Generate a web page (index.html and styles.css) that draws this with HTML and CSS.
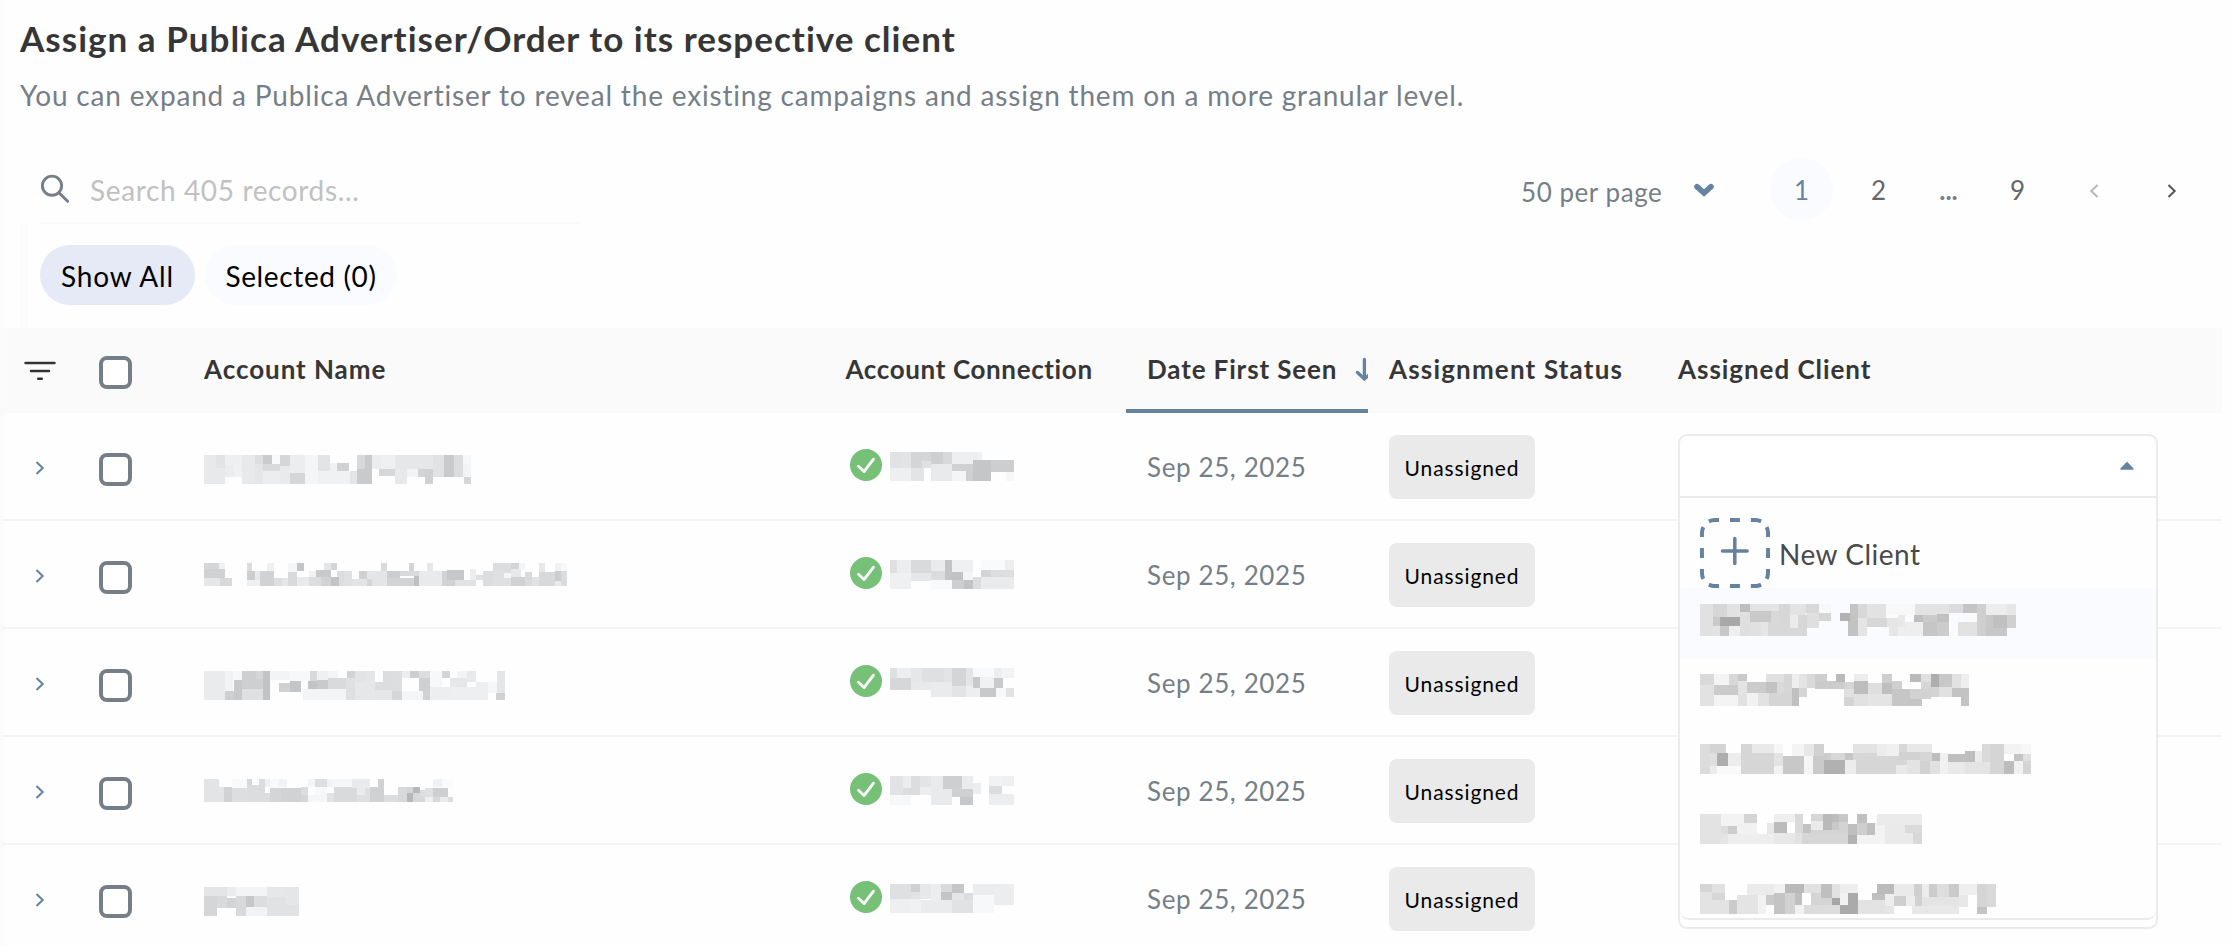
FILE: index.html
```html
<!DOCTYPE html>
<html lang="en">
<head>
<meta charset="utf-8">
<title>Assign clients</title>
<link rel="stylesheet" href="styles.css">
</head>
<body>
<svg class="defs" width="0" height="0">
  <symbol id="chev" viewBox="0 0 10 16"><path d="M1.5 2 L7.7 8 L1.5 14" fill="none" stroke="currentColor" stroke-width="2"/></symbol>
  <symbol id="ok" viewBox="0 0 32 32"><circle cx="16" cy="16" r="16" fill="#76c078"/><path d="M8.5 17.2 L14 22.6 L23.5 10.2" fill="none" stroke="#fff" stroke-width="2.8" stroke-linecap="round" stroke-linejoin="round"/></symbol>
</svg>
<main class="page">
  <h1 class="title">Assign a Publica Advertiser/Order to its respective client</h1>
  <p class="subtitle">You can expand a Publica Advertiser to reveal the existing campaigns and assign them on a more granular level.</p>

  <div class="toolbar">
    <div class="search">
      <svg class="search-icon" width="30" height="30" viewBox="0 0 30 30"><circle cx="12" cy="11.700" r="9.600" fill="none" stroke="#767e87" stroke-width="2.900"/><path d="M19 18.800 L27.600 27.300" stroke="#767e87" stroke-width="3" stroke-linecap="round"/></svg>
      <span class="search-text">Search 405 records...</span>
    </div>
    <div class="pager">
      <span class="per-page">50 per page</span>
      <svg class="per-chev" width="22" height="16" viewBox="0 0 22 16"><path d="M4 4.6 L11 11 L18 4.6" fill="none" stroke="#65839e" stroke-width="5.6" stroke-linecap="round"/></svg>
      <span class="pg pg-on">1</span>
      <span class="pg pg-two">2</span>
      <span class="pg pg-dots">...</span>
      <span class="pg pg-nine">9</span>
      <svg class="prev" width="10" height="16"><use href="#chev"/></svg>
      <svg class="next" width="10" height="16"><use href="#chev"/></svg>
    </div>
  </div>

  <div class="chips">
    <span class="chip chip-on">Show All</span>
    <span class="chip chip-sel">Selected (0)</span>
  </div>

  <section class="table">
    <div class="row head">
      <div class="c-exp"><svg class="filter" width="32" height="20" viewBox="0 0 32 20"><path d="M1.5 2 H30.5 M7 10 H25 M14.2 17.8 H17.8" stroke="#333" stroke-width="2.4" stroke-linecap="round"/></svg></div>
      <div class="c-check"><i class="box"></i></div>
      <div class="h-name">Account Name</div>
      <div class="h-conn">Account Connection</div>
      <div class="sorted"><span class="h-date">Date First Seen</span><svg class="sort" width="13" height="24" viewBox="0 0 13 24"><path d="M9.4 2.500 V21.5 M2.500 15.500 L9.4 22 L16.8 15.500" fill="none" stroke="#65839e" stroke-width="3.300" stroke-linecap="round"/></svg></div>
      <div class="h-status">Assignment Status</div>
      <div class="h-client">Assigned Client</div>
    </div>
    <div class="row">
      <div class="c-exp"><svg class="exp" width="10" height="16"><use href="#chev"/></svg></div>
      <div class="c-check"><i class="box"></i></div>
      <div><svg class="mosaic name tall" data-m="n1"></svg></div>
      <div class="c-conn"><svg width="32" height="32"><use href="#ok"/></svg><svg class="mosaic conn" data-m="c1"></svg></div>
      <div class="c-date">Sep 25, 2025</div>
      <div class="c-status"><span class="badge">Unassigned</span></div>
      <div class="c-client">
        <div class="select">
          <div class="field"><svg width="16" height="10" viewBox="0 0 16 10"><path d="M2 8 L8 1.8 L14 8 Z" fill="#65839e" stroke="#65839e" stroke-width="1.6" stroke-linejoin="round"/></svg></div>
          <div class="menu">
            <div class="new">
              <svg width="70" height="70" viewBox="0 0 71 70" preserveAspectRatio="none"><path d="M9 3.4 Q12 2 14.500 2 H19.300 M30.400 2 H40.500 M51.600 2 H56.500 Q59 2 62 3.400 M9 66.600 Q12 68 14.500 68 H19.300 M30.400 68 H40.500 M51.600 68 H56.500 Q59 68 62 66.600 M3.400 9.200 Q2 12 2 14.500 V19 M2 30 V40 M2 51 V55.500 Q2 58 3.400 60.800 M67.600 9.200 Q69 12 69 14.500 V19 M69 30 V40 M69 51 V55.500 Q69 58 67.600 60.800" fill="none" stroke="#65839e" stroke-width="4"/><path d="M22.800 33 H47.800 M35.300 20.500 V45.500" stroke="#65839e" stroke-width="3.600" stroke-linecap="round"/></svg>
              <span class="new-text">New Client</span>
            </div>
            <div class="opt opt-on"><svg class="mosaic" data-m="d1"></svg></div>
            <div class="opt"><svg class="mosaic" data-m="d2"></svg></div>
            <div class="opt"><svg class="mosaic" data-m="d3"></svg></div>
            <div class="opt"><svg class="mosaic" data-m="d4"></svg></div>
            <div class="opt"><svg class="mosaic" data-m="d5"></svg></div>
          </div>
        </div>
      </div>
    </div>
    <div class="row">
      <div class="c-exp"><svg class="exp" width="10" height="16"><use href="#chev"/></svg></div>
      <div class="c-check"><i class="box"></i></div>
      <div><svg class="mosaic name" data-m="n2"></svg></div>
      <div class="c-conn"><svg width="32" height="32"><use href="#ok"/></svg><svg class="mosaic conn" data-m="c2"></svg></div>
      <div class="c-date">Sep 25, 2025</div>
      <div class="c-status"><span class="badge">Unassigned</span></div>
    </div>
    <div class="row">
      <div class="c-exp"><svg class="exp" width="10" height="16"><use href="#chev"/></svg></div>
      <div class="c-check"><i class="box"></i></div>
      <div><svg class="mosaic name tall" data-m="n3"></svg></div>
      <div class="c-conn"><svg width="32" height="32"><use href="#ok"/></svg><svg class="mosaic conn" data-m="c3"></svg></div>
      <div class="c-date">Sep 25, 2025</div>
      <div class="c-status"><span class="badge">Unassigned</span></div>
    </div>
    <div class="row">
      <div class="c-exp"><svg class="exp" width="10" height="16"><use href="#chev"/></svg></div>
      <div class="c-check"><i class="box"></i></div>
      <div><svg class="mosaic name" data-m="n4"></svg></div>
      <div class="c-conn"><svg width="32" height="32"><use href="#ok"/></svg><svg class="mosaic conn" data-m="c4"></svg></div>
      <div class="c-date">Sep 25, 2025</div>
      <div class="c-status"><span class="badge">Unassigned</span></div>
    </div>
    <div class="row">
      <div class="c-exp"><svg class="exp" width="10" height="16"><use href="#chev"/></svg></div>
      <div class="c-check"><i class="box"></i></div>
      <div><svg class="mosaic name tall" data-m="n5"></svg></div>
      <div class="c-conn"><svg width="32" height="32"><use href="#ok"/></svg><svg class="mosaic conn" data-m="c5"></svg></div>
      <div class="c-date">Sep 25, 2025</div>
      <div class="c-status"><span class="badge">Unassigned</span></div>
    </div>
  </section>
</main>
<script src="mosaic.js"></script>
</body>
</html>
```
FILE: styles.css
```css
* { box-sizing: border-box; }
body { margin: 0; width: 2232px; height: 946px; overflow: hidden; background: #fefefe; font-family: Lato, "Open Sans", sans-serif; color: #333; }
svg { display: block; flex: none; }
.defs { position: absolute; }
.page { height: 946px; overflow: hidden; padding-top: 16px; background: linear-gradient(90deg, #fafafa 0, #fefefe 8px); }
.title { margin: 0 0 0 20px; height: 44px; line-height: 44px; font-size: 35px; font-weight: 700; letter-spacing: 1.02px; white-space: nowrap; color: #363636; }
.subtitle { margin: 15px 0 0 20px; height: 39px; line-height: 40px; font-size: 28px; letter-spacing: .82px; white-space: nowrap; color: #767e87; }

.toolbar { display: flex; justify-content: space-between; height: 110px; padding: 40px 0 0 40px; }
.search { display: flex; align-items: center; width: 540px; height: 70px; border-bottom: 2px solid #fafafa; }
.search-icon { margin: 2px 20px 0 0; }
.search-text { padding-top: 3px; line-height: 40px; font-size: 28px; letter-spacing: .63px; color: #c1c1c1; }
.pager { display: flex; align-items: center; width: 710px; height: 71px; font-size: 26px; color: #767e87; }
.per-page { width: 172px; margin-left: -1px; padding-top: 4px; letter-spacing: .55px; white-space: nowrap; }
.per-chev { margin-right: 55px; }
.pg { width: 63px; height: 63px; line-height: 65px; text-align: center; color: #666; }
.pg-on { background: #fafbfe; border-radius: 50%; color: #65839e; }
.pg-two { margin-left: 14px; }
.pg-dots { margin-left: 7px; font-weight: 700; color: #767e87; }
.pg-nine { margin-left: 6px; }
.prev { margin: 2px 0 0 40px; transform: scaleX(-1); color: #b5b9bd; }
.next { margin: 2px 0 0 68px; color: #555; }

.chips { display: flex; gap: 10px; height: 104px; margin-left: 20px; padding: 21px 0 0 12px; border-left: 8px solid #fbfbfb; }
.chip { width: 155px; height: 60px; line-height: 63px; border-radius: 30px; background: #fafbfe; font-size: 28px; letter-spacing: .9px; text-align: center; white-space: nowrap; color: #000; }
.chip-on { background: #e6eaf6; }
.chip-sel { width: 192px; letter-spacing: .65px; }

.table { width: 2220px; margin-left: 2px; }
.row { display: grid; grid-template-columns: 97px 105px 641.5px 280.5px 263px 289px 544px; align-items: center; height: 108px; border-bottom: 2px solid #f4f4f4; }
.head { height: 85px; border-bottom: 0; background: #fafafa; font-size: 26px; font-weight: 700; white-space: nowrap; color: #363636; }
.h-name, .h-conn, .h-status, .h-client { padding-bottom: 4px; }
.h-name, .h-client { letter-spacing: .95px; }
.h-conn { letter-spacing: .63px; }
.h-status { letter-spacing: 1.17px; }
.sorted { display: flex; align-items: center; align-self: stretch; width: 242px; padding-left: 21px; border-bottom: 4px solid #65839e; }
.h-date { width: 209px; letter-spacing: .87px; }
.c-exp { padding-left: 22px; }
.exp { margin: 3px 0 0 11px; color: #65839e; }
.box { display: block; width: 33px; height: 33px; margin-top: 7px; border: 4px solid #767e87; border-radius: 8px; background: #fff; }
.head .box { margin-top: 4px; }
.mosaic { shape-rendering: crispEdges; }
.name { margin-top: 1px; }
.tall { margin-top: 7px; }
.c-conn { display: flex; align-items: center; padding: 0 0 3px 4.5px; }
.conn { margin: 3px 0 0 8px; }
.c-date { padding: 2px 0 0 21px; font-size: 26px; letter-spacing: .62px; color: #767e87; }
.badge { display: block; width: 146px; height: 64px; line-height: 66px; margin-top: 1px; border-radius: 8px; background: #eaeaea; font-size: 21px; letter-spacing: .9px; text-align: center; color: #000; }

.c-client { position: relative; align-self: start; }
.select { position: absolute; z-index: 2; top: 21px; left: 0; width: 480px; height: 495px; border: 2px solid #ebebeb; border-radius: 9px; background: #fff; }
.field { display: flex; align-items: center; justify-content: flex-end; height: 60px; padding-right: 21px; }
.menu { height: 424px; border: solid #ebebeb; border-width: 2px 0; border-radius: 0 0 9px 9px; background: #fefefe; overflow: hidden; }
.new { display: flex; align-items: center; height: 90px; padding: 20px 0 0 20px; }
.new-text { margin-left: 9px; padding-top: 1px; font-size: 28px; letter-spacing: .5px; color: #4a4a4a; }
.opt { height: 70px; padding: 16px 0 0 20px; }
.opt-on { background: #fafbfe; }
```
FILE: mosaic.js
```js
// Redaction mosaics. v: x y w h; s: horizontal units per pixel; t: blue tint; c: x1 y1 x2 y2 shade
const data = {
n1: { v: [533,405,698,87], s: 2.613, t: 1, c: "533 405 588 492 e8;564 405 588 443 e2;588 405 632 435 ee;588 435 612 471 eb;612 435 632 471 f0;632 405 666 492 e8;666 405 687 432 dd;687 405 711 432 ca;711 405 732 432 f9;732 405 758 437 d5;758 405 797 459 ec;687 432 732 452 d9;666 432 687 492 e5;687 452 732 492 ec;732 437 758 492 e9;758 459 797 492 d5;797 405 831 492 f4;831 405 862 453 e3;862 429 881 453 f0;881 429 912 453 d0;831 453 915 492 f0;915 453 933 492 e4;933 405 953 447 d8;953 405 972 492 c9;933 447 972 492 c9;972 405 996 447 ec;996 405 1032 447 ef;990 447 1032 468 d6;1032 405 1132 447 e6;1032 447 1064 492 e8;1064 447 1092 471 f2;1092 447 1111 471 d3;1111 447 1132 492 d0;1132 405 1160 471 e1;1160 405 1186 471 c9;1186 405 1210 471 dc;1210 405 1231 432 f6;1210 432 1231 471 f3;1213 471 1231 492 d5" },
n2: { v: [533,729,949,69], s: 2.613, t: 1, c: "533 729 572 747 d5;533 747 588 774 d0;572 729 588 747 ef;533 774 575 798 e6;575 774 606 798 d8;645 729 659 753 dc;698 729 716 753 ef;645 753 666 780 cc;666 753 679 798 e8;679 753 716 798 d1;645 780 679 798 ef;716 774 737 798 dd;753 729 776 756 f4;776 729 794 753 c4;737 774 776 798 e5;753 756 776 798 d9;776 771 808 798 ea;808 753 826 771 f1;826 750 865 771 c8;846 729 865 750 e5;865 729 881 750 d4;808 771 838 798 dc;838 771 865 798 d1;865 771 886 798 c3;881 753 899 771 dc;886 771 920 798 dd;899 753 920 798 e0;938 753 959 777 cf;920 777 959 798 e3;959 777 972 798 d4;959 753 980 777 e6;972 771 1011 798 e3;980 753 1011 798 e4;996 729 1011 753 d9;1011 753 1045 774 cc;1011 774 1082 798 d2;1045 753 1095 768 d9;1069 729 1082 753 d2;1082 768 1095 798 bf;1095 753 1155 798 e9;1116 729 1132 753 e6;1155 753 1189 798 d1;1168 750 1214 780 c6;1189 780 1243 798 e1;1229 747 1243 780 ec;1243 765 1262 780 df;1262 753 1288 798 dc;1288 729 1335 753 dc;1288 753 1335 798 df;1316 759 1335 774 f4;1335 729 1356 747 d4;1335 747 1361 771 e7;1335 771 1374 798 d1;1356 729 1372 747 f3;1372 756 1390 798 da;1390 771 1408 798 e2;1408 729 1424 756 e7;1408 756 1450 798 d8;1450 729 1466 753 f0;1450 753 1466 783 cc;1466 729 1482 753 f7;1466 753 1482 798 db;1450 783 1466 798 e8" },
n3: { v: [531,93,786,87], s: 2.613, t: 1, c: "531 93 585 180 ea;585 93 606 153 f2;585 153 609 180 ce;606 93 630 120 f7;609 120 630 180 c8;630 93 666 147 ce;666 93 685 117 d4;666 117 685 147 ce;630 147 685 180 df;685 93 703 180 c2;703 93 755 120 f3;755 93 808 123 f7;727 129 755 156 cf;755 123 784 156 c4;808 93 826 123 d7;826 93 855 120 ef;855 93 881 114 f4;802 123 826 156 c3;826 120 855 147 c9;855 114 904 147 d9;789 147 902 180 f3;904 93 925 114 d2;902 114 925 180 df;925 93 954 126 e2;925 126 977 180 e6;954 93 977 126 e5;998 93 1022 126 dc;977 126 1022 150 dc;977 150 1022 180 e5;1022 93 1048 153 dd;1022 153 1048 180 d5;1048 93 1069 114 ec;1069 93 1092 114 cd;1092 93 1121 114 dc;1092 114 1121 153 cf;1048 153 1103 180 f4;1103 153 1121 180 d0;1121 93 1152 141 f7;1152 93 1173 114 d4;1121 141 1173 180 ed;1173 114 1218 141 e6;1192 93 1218 114 f2;1218 93 1241 126 e8;1173 141 1241 180 ee;1241 126 1273 180 ee;1273 126 1295 159 f5;1295 93 1317 159 e5;1294 159 1317 180 d0" },
n4: { v: [531,417,650,69], s: 2.613, t: 1, c: "531 417 570 486 e3;570 441 583 486 e3;583 441 604 486 d1;604 417 643 444 f8;604 444 643 486 dd;643 417 656 435 d5;643 435 674 459 dc;674 417 690 459 db;690 417 703 441 ef;643 459 703 486 dc;703 417 727 444 f8;727 417 747 441 f1;703 444 733 486 d4;733 444 784 486 d1;784 441 802 465 dc;784 465 802 486 d5;802 417 821 441 f4;821 417 852 441 dd;802 465 852 486 f5;821 441 852 465 f7;852 417 865 441 f1;852 459 870 486 e2;865 417 917 444 f5;870 441 930 486 d9;917 417 964 444 ea;930 444 951 465 eb;951 444 964 465 df;930 465 964 486 df;964 441 985 486 d0;985 417 1001 486 d0;1001 465 1037 486 dc;1037 441 1061 486 d8;1061 441 1077 459 d3;1077 441 1095 459 b7;1061 459 1077 486 b6;1077 459 1108 486 d7;1095 450 1108 471 dc;1108 444 1129 471 df;1129 417 1152 441 f0;1129 444 1168 471 ce;1108 471 1129 486 ee;1129 471 1147 486 d8;1147 471 1168 486 eb;1152 417 1181 444 fa;1168 471 1181 486 dd" },
n5: { v: [533,741,248,87], s: 2.613, t: 1, c: "533 741 594 768 e4;533 768 567 828 d5;567 768 594 804 d9;594 741 617 768 eb;594 774 617 804 d3;617 741 698 768 f3;617 768 643 828 d8;643 768 664 801 c6;664 768 698 801 dc;643 801 698 828 f2;698 741 747 771 e6;698 771 781 828 e1;747 741 781 795 e5" },
c1: { v: [150,363,263,87], s: 2.119, t: 1, c: "150 363 175 411 e1;175 363 195 411 e3;195 363 237 411 d4;218 390 237 411 df;237 363 263 399 ce;263 363 282 399 d8;282 363 345 399 ee;345 363 413 387 fd;150 411 195 450 ee;195 411 222 450 e3;237 399 282 450 e9;282 399 326 420 d0;282 420 311 450 f4;311 420 326 450 ce;326 387 364 450 c5;364 387 413 423 cd;396 423 413 450 f6" },
c2: { v: [150,687,263,87], s: 2.119, t: 1, c: "150 687 165 726 df;165 687 195 726 ec;195 687 237 726 d9;237 687 267 720 ea;267 687 282 747 c3;282 687 326 723 ef;282 723 305 747 c1;150 726 195 774 ef;195 726 237 750 e5;237 720 267 747 db;237 747 282 774 f8;282 747 308 774 cd;308 747 326 774 c2;305 723 326 747 f4;326 738 343 774 dc;343 687 394 717 f9;394 687 413 717 ed;343 717 364 738 d3;364 717 413 738 dd;343 738 413 774 ea" },
c3: { v: [150,81,263,87], s: 2.119, t: 1, c: "150 81 165 111 df;165 81 195 111 ed;150 111 195 147 d6;195 81 218 123 e6;218 81 265 123 df;265 81 282 123 e3;195 123 237 147 e8;237 123 282 168 ea;282 81 311 135 d4;311 81 326 135 e4;282 135 311 168 e3;311 135 341 168 ed;326 81 371 108 f8;326 108 341 141 c8;341 108 371 141 f0;371 81 386 111 ec;386 81 413 111 f2;371 111 390 141 c9;341 141 375 168 c8;375 141 396 168 f7;396 141 413 168 e2" },
c4: { v: [150,405,263,87], s: 2.119, t: 1, c: "150 405 178 462 e2;178 405 195 441 ec;178 441 195 462 dd;195 405 214 462 dc;214 405 237 438 e3;214 438 237 462 ec;237 405 263 492 e9;263 405 303 444 ce;263 444 282 492 e9;303 405 326 444 ea;282 444 326 468 cf;299 468 326 492 c6;326 426 343 459 ec;150 462 195 492 f7;360 405 388 435 f1;388 405 413 435 ee;360 435 388 459 dc;360 459 413 492 ec" },
c5: { v: [150,729,263,87], s: 2.119, t: 1, c: "150 729 195 774 df;195 729 214 753 cf;214 729 237 774 e7;195 753 214 774 e2;237 729 259 777 ec;259 729 282 753 d9;282 729 307 756 c5;259 753 282 777 c3;282 756 307 777 e4;307 756 326 777 dc;150 774 195 816 ee;195 774 216 816 f0;216 777 282 816 ea;282 777 326 816 e1;326 729 371 762 eb;326 762 371 816 f7;371 729 413 792 ec" },
d1: { v: [110,549,866,96], s: 2.741, t: 0, c: "110 549 145 645 e1;145 549 184 588 d6;184 549 219 588 e2;145 588 164 615 ca;164 588 219 615 a8;145 615 164 645 e3;164 615 189 645 c8;189 615 219 645 ef;219 549 247 573 be;219 573 247 645 df;247 549 304 570 e3;247 570 304 603 c9;247 603 277 645 e1;277 603 296 645 e5;304 549 326 570 e4;326 549 356 645 d7;296 603 356 645 d8;304 570 326 603 d8;356 549 400 582 e3;356 582 378 621 eb;378 582 403 621 d7;356 621 403 645 d8;400 549 436 576 d8;403 576 436 621 df;436 549 469 576 f8;436 576 469 600 d5;493 576 521 600 b2;521 549 543 588 c4;515 600 543 645 c2;543 549 567 591 d8;521 576 543 600 c4;543 591 567 645 e5;567 549 620 591 e2;567 591 622 618 d7;622 591 652 618 e5;652 582 672 618 e9;628 618 652 645 e6;652 618 721 645 ee;672 603 721 645 ee;620 549 699 582 f8;699 549 792 582 e3;696 582 721 603 bf;721 582 759 603 cb;759 579 792 603 c2;721 603 759 645 c6;759 603 792 645 cc;792 549 831 576 dc;831 549 869 576 c4;831 576 869 603 fa;817 603 869 645 e2;869 549 894 645 cf;894 549 951 582 ec;894 582 913 621 c8;913 582 951 621 c0;894 621 951 645 c7;951 549 976 582 e7;951 582 976 621 d0" },
d2: { v: [110,9,737,96], s: 2.741, t: 0, c: "110 9 148 42 d9;148 9 189 42 f4;189 9 214 42 d8;214 9 238 30 ca;110 42 148 105 e2;148 42 214 72 cb;214 30 238 72 e3;148 72 214 105 f4;214 72 238 105 e1;238 33 291 66 cb;238 66 269 105 f2;269 66 299 105 e2;291 9 340 33 e1;291 33 321 66 c3;299 66 362 105 d5;321 33 340 66 da;340 9 362 66 d6;362 9 381 51 ee;381 9 403 51 e3;403 9 425 51 d9;425 9 458 30 ce;425 30 482 54 cb;362 51 381 105 c0;381 51 403 78 d5;482 9 507 33 ba;482 33 507 54 cd;507 33 532 54 d6;504 54 532 78 e0;504 78 532 105 d4;532 9 570 30 ed;532 30 570 69 bd;532 69 570 105 e1;570 36 609 69 df;570 69 636 105 e4;609 9 636 36 ce;609 36 636 69 bf;636 30 663 54 cf;636 54 685 105 c6;685 9 715 33 ba;715 9 743 33 e0;715 33 743 54 d6;685 54 743 84 d2;685 84 718 105 c6;743 9 765 48 ae;765 9 800 48 c8;743 48 765 78 d4;765 48 800 78 e1;800 9 825 51 e2;825 9 847 51 ee;800 51 847 78 c3;825 78 847 105 c3" },
d3: { v: [110,219,907,90], s: 2.741, t: 0, c: "110 219 137 309 dc;137 219 181 246 d4;137 246 156 285 df;156 246 186 285 ae;186 246 222 285 ed;137 285 156 309 ec;156 285 222 309 f9;222 219 252 309 d6;252 219 313 246 e9;252 246 313 309 d6;313 219 337 246 f6;313 246 337 285 e3;313 285 337 309 f2;337 255 395 309 c8;362 219 395 255 f4;395 219 422 255 e7;395 255 419 309 f5;422 219 450 255 d1;419 255 450 309 ca;450 246 469 267 cd;469 246 507 267 d8;507 246 529 267 c6;450 267 507 309 b1;507 267 537 309 ec;529 219 595 246 e3;529 246 565 267 d7;595 219 622 255 ec;622 219 655 255 f0;537 255 677 309 d6;565 246 595 267 d6;655 219 677 243 d7;677 219 746 243 e8;655 243 713 267 d2;647 282 677 309 e9;677 267 713 309 e3;713 243 746 270 d6;713 270 740 309 d2;740 270 768 309 e1;746 246 768 270 be;768 246 789 309 f1;789 249 836 273 bf;836 240 863 273 be;789 273 836 309 e9;836 273 905 309 e4;863 240 883 273 eb;883 219 905 273 d9;905 219 943 309 d5;943 219 989 249 f3;989 219 1017 249 f7;970 249 995 270 c4;995 249 1017 270 e0;943 270 970 309 bc;970 270 995 309 f1;995 270 1017 309 d5" },
d4: { v: [110,429,608,90], s: 2.741, t: 0, c: "110 429 167 519 e3;167 429 230 465 f3;230 429 266 456 d4;167 465 186 489 dc;186 465 211 489 cd;211 456 266 489 f1;167 489 186 519 e5;186 489 313 519 ee;293 456 313 489 e8;313 429 370 453 ef;313 453 348 486 bc;313 486 370 519 e8;370 429 392 486 d9;370 486 389 519 e2;392 459 414 486 c3;414 429 447 450 d6;414 450 447 477 eb;389 486 515 519 d6;414 477 515 489 d4;447 429 471 477 b9;471 429 491 453 be;491 429 515 453 c7;471 453 491 477 c9;491 453 515 480 d3;515 459 540 492 bf;515 492 540 519 b2;540 429 567 456 c0;540 456 567 492 ce;567 456 589 492 c0;540 492 617 519 f3;589 456 617 492 f3;595 429 718 462 eb;617 462 672 519 ea;672 462 718 486 db;672 486 694 519 ea;694 486 718 519 d8" },
d5: { v: [110,639,811,90], s: 2.741, t: 0, c: "110 639 143 663 d5;143 639 178 666 e1;110 663 143 729 e3;143 666 178 687 d7;143 687 189 729 e3;189 687 211 729 cb;211 672 269 729 e4;238 639 313 672 eb;269 672 291 729 f2;313 639 343 666 f1;291 672 313 702 c9;313 666 343 729 c4;343 639 395 666 ba;343 666 370 729 d2;370 666 389 702 bf;370 702 395 729 f2;395 639 441 666 e1;414 666 441 702 d5;395 702 493 729 dc;441 639 471 681 bf;441 681 471 702 d4;471 639 493 681 e2;471 681 493 702 a7;493 639 543 666 ee;493 666 515 702 f2;515 666 543 729 aa;493 702 515 729 aa;543 687 617 729 e3;581 666 617 687 c0;595 639 641 669 bb;617 669 641 705 ee;617 705 641 729 e5;641 639 696 675 ea;641 675 674 705 cf;674 675 699 705 ed;696 639 718 675 cf;699 675 718 705 d1;718 639 737 678 ec;737 639 759 678 cc;759 639 792 678 dd;792 639 820 678 ca;718 678 820 708 e4;691 705 820 729 e8;820 639 869 672 ef;820 672 844 708 e8;869 639 897 708 d5;897 639 921 708 d9;869 708 896 729 c4" }
};
const NS = "http://www.w3.org/2000/svg";
for (const el of document.querySelectorAll("[data-m]")) {
  const { v, s, t, c } = data[el.dataset.m];
  el.setAttribute("viewBox", v.join(" "));
  el.setAttribute("preserveAspectRatio", "none");
  el.setAttribute("width", Math.round(v[2] / s));
  el.setAttribute("height", Math.round(v[3] / 3));
  for (const cell of c.split(";")) {
    const p = cell.split(" ");
    const g = parseInt(p[4], 16);
    const r = document.createElementNS(NS, "rect");
    r.setAttribute("x", p[0]);
    r.setAttribute("y", p[1]);
    r.setAttribute("width", p[2] - p[0]);
    r.setAttribute("height", p[3] - p[1]);
    r.setAttribute("fill", `rgb(${g - t},${g + t},${g + 2 * t})`);
    el.appendChild(r);
  }
}
```
